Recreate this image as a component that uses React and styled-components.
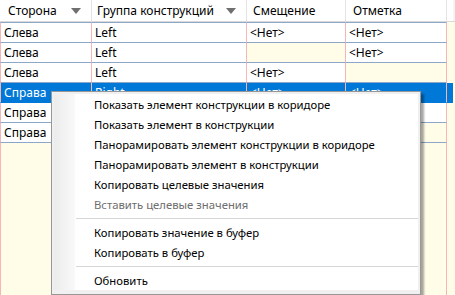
import React from 'react'
import styled, { createGlobalStyle } from 'styled-components'

const GlobalStyle = createGlobalStyle`
  html, body {
    margin: 0;
    padding: 0;
    background: #fffde8;
  }
  body {
    font-family: "Noto Sans", "Segoe UI", sans-serif;
    font-size: 12px;
    color: #000;
  }
`

const COLS = '92px 155px 99px 101px 6px'

const Grid = styled.div`
  position: relative;
  width: 455px;
  height: 295px;
  display: flex;
  flex-direction: column;
  background: #fffde8;
  overflow: hidden;
`

const HeaderRow = styled.div`
  display: grid;
  grid-template-columns: ${COLS} 1fr;
  height: 21px;
  border-bottom: 1px solid #d9d9d9;
  background: #fff;
`

const HeaderCell = styled.div`
  display: flex;
  align-items: center;
  padding-left: ${p => p.$pad || 6}px;
  padding-right: 10px;
  border-right: 1px solid #e4e4e4;
  white-space: nowrap;
  overflow: hidden;
`

const HeaderFill = styled.div`
  background: #f4f4f4;
`

const HeaderLabel = styled.span`
  flex: 1;
`

const FilterArrow = styled.span`
  width: 0;
  height: 0;
  border-left: 5px solid transparent;
  border-right: 5px solid transparent;
  border-top: 6px solid #6f6f6f;
`

const Body = styled.div`
  flex: 1;
  display: flex;
  flex-direction: column;
`

const Row = styled.div`
  display: grid;
  grid-template-columns: ${COLS};
  height: ${p => (p.$first ? 21 : 20)}px;
`

const Cell = styled.div`
  display: flex;
  align-items: center;
  padding-left: 3px;
  white-space: nowrap;
  overflow: hidden;
  border-right: 1px solid #f4b6b6;
  border-left: ${p => (p.$first ? '1px solid #f4b6b6' : 'none')};
  border-top: ${p => (p.$top ? '1px solid #8ea7c9' : 'none')};
  border-bottom: 1px solid ${p => (p.$selected ? '#0078d7' : '#8ea7c9')};
  background: ${p => (p.$selected ? '#0078d7' : p.$empty ? '#fffde8' : '#fff')};
  color: ${p => (p.$selected ? '#fff' : '#000')};
`

const EndCell = styled.div`
  background: ${p => (p.$selected ? '#0078d7' : 'transparent')};
`

const Filler = styled.div`
  flex: 1;
  display: grid;
  grid-template-columns: ${COLS};
`

const FillCell = styled.div`
  border-right: 1px solid #f4b6b6;
  border-left: ${p => (p.$first ? '1px solid #f4b6b6' : 'none')};
`

const Menu = styled.div`
  position: absolute;
  left: 51px;
  top: 91px;
  width: 364px;
  padding: 2px 2px 4px;
  border: 1px solid #979797;
  background: #f0f0f0;
  box-shadow: 3px 3px 2px rgba(0, 0, 0, 0.35);
  font-size: 11.3px;
`

const MenuInner = styled.div`
  display: flex;
  flex-direction: column;
  background: linear-gradient(to right, #ececec 0px, #f8f8f8 20px, #fff 22px);
`

const MenuItem = styled.div`
  height: 20px;
  display: flex;
  align-items: center;
  padding-left: 40px;
  white-space: nowrap;
  color: ${p => (p.$disabled ? '#6d6d6d' : '#000')};
`

const Separator = styled.div`
  height: 8px;
  display: flex;
  align-items: center;
  margin-left: 22px;

  &::after {
    content: '';
    flex: 1;
    border-top: 1px solid #d7d7d7;
  }
`

const rows = [
  ['Слева', 'Left', '<Нет>', '<Нет>'],
  ['Слева', 'Left', '', '<Нет>'],
  ['Слева', 'Left', '<Нет>', ''],
  ['Справа', 'Right', '<Нет>', '<Нет>'],
  ['Справа', 'Right', '<Нет>', '<Нет>'],
  ['Справа', 'Right', '<Нет>', ''],
]

const menu = [
  { label: 'Показать элемент конструкции в коридоре' },
  { label: 'Показать элемент в конструкции' },
  { label: 'Панорамировать элемент конструкции в коридоре' },
  { label: 'Панорамировать элемент в конструкции' },
  { label: 'Копировать целевые значения' },
  { label: 'Вставить целевые значения', disabled: true },
  { sep: true },
  { label: 'Копировать значение в буфер' },
  { label: 'Копировать в буфер' },
  { sep: true },
  { label: 'Обновить' },
]

export default function App() {
  const selected = 3

  return (
    <>
      <GlobalStyle />
      <Grid>
        <HeaderRow>
          <HeaderCell $pad={8}>
            <HeaderLabel>Сторона</HeaderLabel>
            <FilterArrow />
          </HeaderCell>
          <HeaderCell $pad={5}>
            <HeaderLabel>Группа конструкций</HeaderLabel>
            <FilterArrow />
          </HeaderCell>
          <HeaderCell $pad={6}>
            <HeaderLabel>Смещение</HeaderLabel>
          </HeaderCell>
          <HeaderCell $pad={7}>
            <HeaderLabel>Отметка</HeaderLabel>
          </HeaderCell>
          <HeaderCell />
          <HeaderFill />
        </HeaderRow>
        <Body>
          {rows.map((r, i) => {
            const sel = i === selected
            return (
              <Row key={i} $first={i === 0}>
                {r.map((v, j) => (
                  <Cell
                    key={j}
                    $first={j === 0}
                    $top={i === 0}
                    $selected={sel}
                    $empty={v === ''}
                  >
                    {v}
                  </Cell>
                ))}
                <EndCell $selected={sel} />
              </Row>
            )
          })}
          <Filler>
            <FillCell $first />
            <FillCell />
            <FillCell />
            <FillCell />
          </Filler>
        </Body>
        <Menu>
          <MenuInner>
            {menu.map((m, i) =>
              m.sep ? (
                <Separator key={i} />
              ) : (
                <MenuItem key={i} $disabled={m.disabled}>
                  {m.label}
                </MenuItem>
              )
            )}
          </MenuInner>
        </Menu>
      </Grid>
    </>
  )
}
